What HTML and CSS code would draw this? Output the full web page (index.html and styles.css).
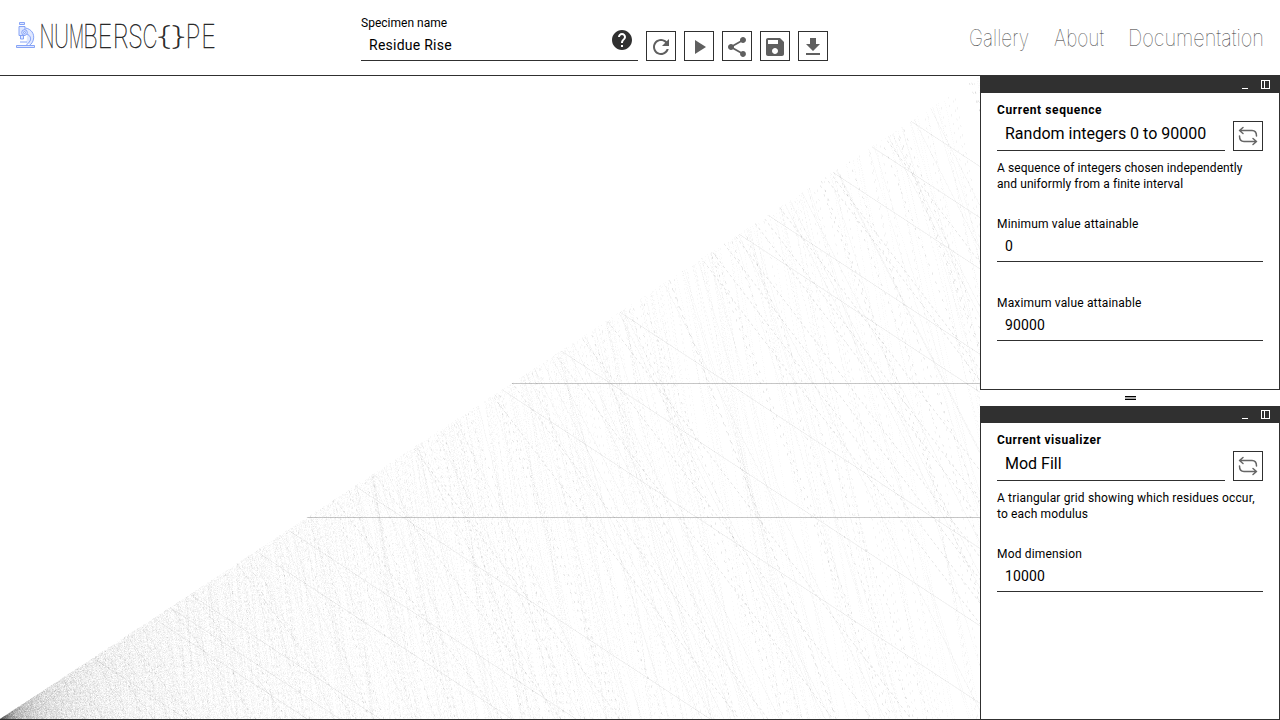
FILE: index.html
```html
<!DOCTYPE html>
<html lang="en">
<head>
<meta charset="utf-8">
<title>Numberscope</title>
<link rel="stylesheet" href="styles.css">
</head>
<body>
<header class="topbar">
  <a class="logo">
    <svg class="logo-mark" width="20" height="28" viewBox="0 0 20 28">
      <path d="M3.500 1.500h5v2h-5zM3 5.500h6v9h-6zM4.500 14.500v3.500h3v-3.500M9.500 7c6 1 9 6 8 11-.5 3-2 5-4 6.500M11 13c3 1.500 4.500 4 3 7-1 1.600-2 2.500-3.500 4M.5 26.500v-2h18v2zM4 21h7"/>
      <circle cx="8.500" cy="11.500" r="2.800"/><circle cx="8.500" cy="11.500" r="1"/>
    </svg>
    <svg class="logo-name" width="176" height="32" viewBox="0 0 176 32"><text class="logo-text" y="27" lengthAdjust="spacingAndGlyphs"><tspan x="-.5" textLength="15" lengthAdjust="spacingAndGlyphs">N</tspan><tspan x="14" textLength="15" lengthAdjust="spacingAndGlyphs">U</tspan><tspan x="29" textLength="15" lengthAdjust="spacingAndGlyphs">M</tspan><tspan x="43" textLength="15" lengthAdjust="spacingAndGlyphs">B</tspan><tspan x="57.500" textLength="15" lengthAdjust="spacingAndGlyphs">E</tspan><tspan x="72.500" textLength="16" lengthAdjust="spacingAndGlyphs">R</tspan><tspan x="88" textLength="15" lengthAdjust="spacingAndGlyphs">S</tspan><tspan x="102.500" textLength="15" lengthAdjust="spacingAndGlyphs">C</tspan><tspan class="brace" x="115" y="23.500" textLength="18" lengthAdjust="spacingAndGlyphs">{</tspan><tspan class="brace" x="129.500" y="23.500" textLength="18" lengthAdjust="spacingAndGlyphs">}</tspan><tspan x="145.500" y="27" textLength="15" lengthAdjust="spacingAndGlyphs">P</tspan><tspan x="161" textLength="15" lengthAdjust="spacingAndGlyphs">E</tspan></text></svg>
  </a>
  <div class="tools">
    <div class="specimen">
      <label class="label label-tight">Specimen name</label>
      <div class="specimen-value">Residue Rise</div>
      <svg class="help" width="24" height="24" viewBox="0 0 24 24"><path d="M12 2C6.480 2 2 6.480 2 12s4.480 10 10 10 10-4.480 10-10S17.520 2 12 2zm1 17h-2v-2h2v2zm2.070-7.750l-.9.920C13.450 12.900 13 13.500 13 15h-2v-.5c0-1.100.45-2.100 1.170-2.830l1.240-1.260c.37-.36.59-.86.59-1.410 0-1.100-.9-2-2-2s-2 .9-2 2H8c0-2.210 1.790-4 4-4s4 1.790 4 4c0 .88-.36 1.680-.93 2.250z"/></svg>
    </div>
    <button class="tool"><svg class="icon" viewBox="0 0 24 24"><path d="M17.650 6.350C16.200 4.900 14.210 4 12 4c-4.420 0-7.990 3.580-7.990 8s3.570 8 7.990 8c3.730 0 6.840-2.550 7.730-6h-2.080c-.82 2.330-3.040 4-5.650 4-3.310 0-6-2.690-6-6s2.690-6 6-6c1.660 0 3.140.69 4.220 1.780L13 11h7V4l-2.350 2.350z"/></svg></button>
    <button class="tool"><svg class="icon" viewBox="0 0 24 24"><path d="M8 5v14l11-7z"/></svg></button>
    <button class="tool"><svg class="icon" viewBox="0 0 24 24"><path d="M18 16.080c-.76 0-1.440.3-1.960.77L8.910 12.700c.05-.23.09-.46.09-.7s-.04-.47-.09-.7l7.050-4.110c.54.5 1.250.81 2.040.81 1.660 0 3-1.340 3-3s-1.340-3-3-3-3 1.340-3 3c0 .24.04.47.09.7L8.040 9.810C7.500 9.310 6.790 9 6 9c-1.660 0-3 1.340-3 3s1.340 3 3 3c.79 0 1.500-.31 2.040-.81l7.120 4.160c-.05.21-.08.43-.08.65 0 1.610 1.310 2.920 2.920 2.920s2.920-1.310 2.920-2.920-1.310-2.920-2.920-2.920z"/></svg></button>
    <button class="tool"><svg class="icon" viewBox="0 0 24 24"><path d="M17 3H5c-1.110 0-2 .9-2 2v14c0 1.100.89 2 2 2h14c1.100 0 2-.9 2-2V7l-4-4zm-5 16c-1.660 0-3-1.340-3-3s1.340-3 3-3 3 1.340 3 3-1.340 3-3 3zm3-10H5V5h10v4z"/></svg></button>
    <button class="tool"><svg class="icon" viewBox="0 0 24 24"><path d="M19 9h-4V3H9v6H5l7 7 7-7zM5 18v2h14v-2H5z"/></svg></button>
  </div>
  <nav class="nav">
    <svg class="nav-item" width="60" height="32"><text class="nav-text" y="22" textLength="60" lengthAdjust="spacingAndGlyphs">Gallery</text></svg>
    <svg class="nav-item" width="50" height="32"><text class="nav-text" y="22" textLength="50" lengthAdjust="spacingAndGlyphs">About</text></svg>
    <svg class="nav-item" width="135" height="32"><text class="nav-text" x="-1" y="22" textLength="136" lengthAdjust="spacingAndGlyphs">Documentation</text></svg>
  </nav>
</header>
<main class="workspace">
  <canvas class="plot" id="plot" width="980" height="643"></canvas>
  <aside class="side">
    <section class="panel">
      <div class="panel-bar"><i class="minimize"></i><i class="dock"></i></div>
      <div class="panel-body">
        <h2 class="heading">Current sequence</h2>
        <div class="chooser"><div class="choice">Random integers 0 to 90000</div>
          <button class="tool"><svg class="swap" viewBox="0 0 20 20"><path d="M5 1.500L1.500 4.500 5 7.500M1.500 4.500H14q4.500 0 4.500 5.500M15 12.500l3.500 3-3.500 3M18.500 15.500H6q-4.500 0-4.500-5.500"/></svg></button></div>
        <p class="about">A sequence of integers chosen independently<br>and uniformly from a finite interval</p>
        <div class="field"><label class="label">Minimum value attainable</label><div class="value">0</div></div>
        <div class="field"><label class="label">Maximum value attainable</label><div class="value">90000</div></div>
      </div>
    </section>
    <div class="splitter"><i class="grip"></i></div>
    <section class="panel">
      <div class="panel-bar"><i class="minimize"></i><i class="dock"></i></div>
      <div class="panel-body">
        <h2 class="heading heading-visualizer">Current visualizer</h2>
        <div class="chooser"><div class="choice">Mod Fill</div>
          <button class="tool"><svg class="swap" viewBox="0 0 20 20"><path d="M5 1.500L1.500 4.500 5 7.500M1.500 4.500H14q4.500 0 4.500 5.500M15 12.500l3.500 3-3.500 3M18.500 15.500H6q-4.500 0-4.500-5.500"/></svg></button></div>
        <p class="about about-visualizer">A triangular grid showing which residues occur,<br>to each modulus</p>
        <div class="field"><label class="label">Mod dimension</label><div class="value">10000</div></div>
      </div>
    </section>
  </aside>
</main>
<script src="plot.js"></script>
</body>
</html>
```
FILE: styles.css
```css
* { box-sizing: border-box; }
body { margin: 0; height: 720px; overflow: hidden; background: #fff; color: #000; font-family: Roboto, sans-serif; font-size: 12px; display: flex; flex-direction: column; }
.topbar { height: 76px; flex: none; border-bottom: 1px solid #303030; display: grid; grid-template-columns: 361px 467px 1fr; }
.logo { display: flex; padding: 21px 0 0 16px; }
.logo-mark { fill: #dfe7ff; stroke: #7b9bf5; stroke-width: .9; }
.logo-name { margin-left: 4px; overflow: visible; }
.logo-text { font: 100 32px Inter, sans-serif; fill: #222; stroke: #222; stroke-width: .4; }
.brace { font-size: 25px; }
.tools { display: flex; gap: 8px; align-items: flex-end; height: 61px; }
.specimen { width: 277px; height: 45px; border-bottom: 1px solid #303030; position: relative; }
.label { display: block; line-height: 14px; letter-spacing: .16px; }
.label-tight { letter-spacing: .02px; }
.specimen-value { padding: 7px 8px 0; font-size: 14px; line-height: 17px; letter-spacing: .25px; }
.help { position: absolute; right: 4px; top: 12px; fill: #303030; }
.tool { width: 30px; height: 30px; padding: 0; border: 1px solid #303030; background: #fff; display: grid; place-items: center; flex: none; }
.icon { width: 24px; height: 24px; fill: #5f5f5f; margin-top: 2px; }
.swap { width: 20px; height: 20px; fill: none; stroke: #666; stroke-width: 1.5; stroke-linecap: round; stroke-linejoin: round; }
.nav { display: flex; justify-content: flex-end; gap: 25px; padding: 24px 16px 0 0; }
.nav-item { overflow: visible; }
.nav-text { font: 100 23px Inter, sans-serif; fill: #333; }
.workspace { display: grid; grid-template-columns: 980px 300px; height: 644px; }
.plot { display: block; box-sizing: content-box; border-bottom: 1px solid #303030; }
.side { display: flex; flex-direction: column; }
.panel { height: 314px; border: 1px solid #303030; border-top: 0; }
.panel-bar { height: 17px; background: #303030; display: flex; justify-content: flex-end; gap: 13px; padding: 4px 9px 0 0; }
.minimize { width: 6px; height: 9px; border-bottom: 1px solid #fff; }
.dock { width: 9px; height: 9px; border: 1px solid #fff; background: linear-gradient(90deg, transparent 2px, #fff 2px, #fff 3px, transparent 3px); }
.panel-body { padding: 10px 16px 0; }
.heading { margin: 0; font-size: 12px; line-height: 14px; font-weight: 700; letter-spacing: .6px; }
.heading-visualizer { letter-spacing: .5px; }
.chooser { display: flex; gap: 8px; margin-top: 4px; }
.choice { flex: 1; height: 30px; border-bottom: 1px solid #303030; padding: 3px 8px 0; font-size: 16px; line-height: 19px; white-space: nowrap; }
.about { margin: 9px 0 25px; line-height: 16px; white-space: nowrap; letter-spacing: .08px; }
.about-visualizer { letter-spacing: .15px; }
.field { height: 45px; border-bottom: 1px solid #303030; margin-bottom: 34px; }
.value { padding: 7px 8px 0; font-size: 14px; line-height: 17px; letter-spacing: .15px; }
.splitter { height: 16px; display: grid; place-items: center; }
.grip { width: 11px; height: 4px; background: #aaa; border: solid #000; border-width: 1px 0; }
```
FILE: plot.js
```js
const canvas = document.getElementById('plot');
const ctx = canvas.getContext('2d');
const W = canvas.width, H = canvas.height, DIM = 10000;

const terms = [3135, 5223, 5878, 3879, 3469, 7246, 1900,
  10245, 11449, 12653, 15082, 15673, 17000, 17796, 18592];
let seed = 4711;
while (terms.length < 74) {
  seed = (seed * 1103515 + 12345) % 2147483648;
  terms.push(20000 + Math.floor(seed / 2147483648 * 70000));
}

// A cell darkens a pixel when it crosses one of its four scanlines.
const light = new Float32Array(W * H).fill(255);
const cellW = W / DIM, cellH = H / DIM;
for (let mod = 1; mod <= DIM; mod++) {
  const x = Math.min(W - 1, Math.floor((mod - 0.5) * cellW));
  for (const res of new Set(terms.map(t => t % mod))) {
    const bottom = H - res * cellH, top = bottom - cellH;
    const line = Math.ceil(top * 4 - 0.5);
    if ((line + 0.5) / 4 >= bottom) continue;
    const y = Math.floor((line + 0.5) / 4);
    if (y >= 0 && y < H) light[y * W + x] *= 1 - cellW / 4;
  }
}
const image = ctx.createImageData(W, H);
for (let i = 0; i < light.length; i++) {
  image.data[i * 4] = image.data[i * 4 + 1] = image.data[i * 4 + 2] = light[i];
  image.data[i * 4 + 3] = 255;
}
ctx.putImageData(image, 0, 0);
```
